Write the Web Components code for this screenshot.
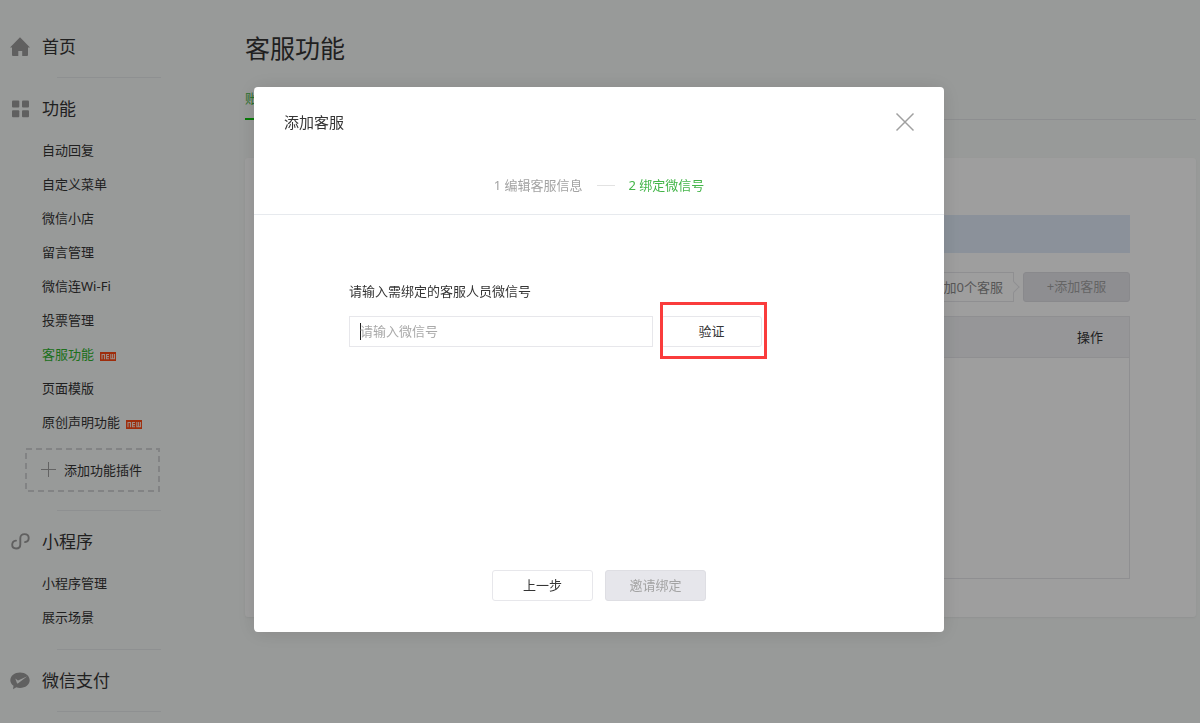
<!DOCTYPE html>
<html lang="zh-CN">
<head>
<meta charset="utf-8">
<title>客服功能</title>
<style>
html{height:100%}
body{margin:0;min-height:100%;background:#f6f8f7;color:#353535;font:13px/20px "Noto Sans","Noto Sans CJK SC",sans-serif}
</style>
</head>
<body>
<template id="t-app">
<style>
:host{display:grid;grid-template-columns:245px minmax(0,1fr);padding-right:4px}
</style>
<mp-sidebar></mp-sidebar>
<mp-service-page></mp-service-page>
<mp-dialog heading="添加客服"><mp-bind-form></mp-bind-form></mp-dialog>
</template>

<template id="t-sidebar">
<style>
:host{display:block;padding:32px 0 0 10px}
</style>
<nav>
<mp-nav-group heading="首页"><svg slot="icon" viewBox="0 0 20 20" width="20" height="20" fill="#9b9b9b"><path d="M10 .3 20 10.500h-2V18a1 1 0 0 1-1 1h-4.800v-5H8.300v5H3a1 1 0 0 1-1-1v-7.500H0z"/></svg></mp-nav-group>
<mp-divider></mp-divider>
<mp-nav-group heading="功能"><svg slot="icon" viewBox="0 0 20 20" width="20" height="20" fill="#9b9b9b"><rect x="2" y="1.500" width="7.300" height="7" rx="1"/><rect x="12" y="1.500" width="7" height="7" rx="1"/><rect x="2" y="11.300" width="7.300" height="7" rx="1"/><rect x="12" y="11.300" width="7" height="7" rx="1"/></svg>
<mp-nav-item>自动回复</mp-nav-item>
<mp-nav-item>自定义菜单</mp-nav-item>
<mp-nav-item>微信小店</mp-nav-item>
<mp-nav-item>留言管理</mp-nav-item>
<mp-nav-item>微信连Wi-Fi</mp-nav-item>
<mp-nav-item>投票管理</mp-nav-item>
<mp-nav-item active fresh>客服功能</mp-nav-item>
<mp-nav-item>页面模版</mp-nav-item>
<mp-nav-item fresh>原创声明功能</mp-nav-item>
<mp-add-plugin slot="after"></mp-add-plugin>
</mp-nav-group>
<mp-divider></mp-divider>
<mp-nav-group heading="小程序"><svg slot="icon" viewBox="0 0 20 20" width="20" height="20" fill="none" stroke="#9b9b9b" stroke-width="1.900" stroke-linecap="round"><path d="M6 8.600C3.800 8.900 2.200 10.500 2.200 12.800c0 2.200 1.700 3.700 3.900 3.700 2.400 0 4.200-1.600 4.200-4V6.200c0-2.400 1.800-4.100 4.200-4.100 2.300 0 4.200 1.500 4.200 3.900 0 2.300-1.500 3.800-3.700 4.100"/></svg>
<mp-nav-item>小程序管理</mp-nav-item>
<mp-nav-item>展示场景</mp-nav-item>
</mp-nav-group>
<mp-divider></mp-divider>
<mp-nav-group heading="微信支付"><svg slot="icon" viewBox="0 0 20 20" width="20" height="20"><path fill="#9b9b9b" d="M10 1.500c5.400 0 9.700 3.400 9.700 7.700s-4.300 7.700-9.700 7.700c-1.300 0-2.600-.2-3.700-.6L3 18.200l.5-3.400C1.500 13.400.3 11.400.3 9.200c0-4.300 4.300-7.700 9.700-7.700z"/><path fill="#f6f8f7" d="m5.300 7.500 2.700 2.100L17.300 5.300 8.200 12.200c-.6.400-1 .3-1.300-.3z"/></svg></mp-nav-group>
<mp-divider></mp-divider>
</nav>
</template>

<template id="t-divider">
<style>
:host{display:block;width:104px;height:1px;margin:15px 0 16px 47px;background:#e6e8ea}
</style>
</template>

<template id="t-nav-group">
<style>
:host{display:block}
h2{display:flex;align-items:center;gap:12px;margin:0;height:30px;font-size:17px;font-weight:400;line-height:30px}
ul{margin:9px 0 0;padding:0 0 0 32px;list-style:none}
ul[hidden]{display:none}
</style>
<h2><slot name="icon"></slot><span></span></h2>
<ul><slot></slot></ul>
<slot name="after"></slot>
</template>

<template id="t-nav-item">
<style>
:host{display:list-item;list-style:none;height:34px}
a{display:inline-flex;align-items:center;gap:6px;height:34px;color:inherit;text-decoration:none}
:host([active]) a{color:#2fb52f}
svg{display:none;margin-top:4px}
:host([fresh]) svg{display:block}
</style>
<a href="#"><slot></slot><svg viewBox="0 0 16 9" width="16" height="9" role="img" aria-label="new"><path fill="#ff4a14" d="M0 0h16v9H0z"/><path fill="none" stroke="#ffe0d4" stroke-width="1.100" d="M2 7.200V2.500h2.500v4.700M9 2.500H6.500v4.200H9M6.500 4.600H9M10.800 2v4.700h3.700V2M12.600 2v4.700"/></svg></a>
</template>

<template id="t-add-plugin">
<style>
:host{display:block;margin:9px 0 18px 15px}
button{display:flex;align-items:center;gap:8px;width:135px;height:44px;padding:0 0 0 15px;border:0;background:none;color:inherit;font:inherit;position:relative}
.edge{position:absolute;inset:0}
</style>
<button type="button"><svg class="edge" width="135" height="44"><rect x="1" y="1" width="133" height="42" fill="none" stroke="#d2d4d6" stroke-width="2" stroke-dasharray="6 4"/></svg><svg width="16" height="16" stroke="#a0a0a0"><path d="M1 7.500h15M8.500 0v15"/></svg>添加功能插件</button>
</template>

<template id="t-service-page">
<style>
:host{display:block;padding-top:28px}
h1{margin:0;font-size:25px;font-weight:400;line-height:40px}
.tabs{display:flex;height:51px;border-bottom:1px solid #e4e6e8}
.tabs a{box-sizing:border-box;width:78px;height:52px;padding-top:20px;border-bottom:2px solid #0cc40c;color:#44b549;text-decoration:none}
.panel{margin-top:38px;padding:57px 66px 38px;border-radius:3px;background:#fff;box-shadow:0 1px 2px #e8ebea}
.notice{height:38px;background:#e0ebf8}
.actions{display:flex;justify-content:flex-end;gap:9px;margin:19px 0 14px}
.tip{position:relative;box-sizing:border-box;width:180px;height:30px;padding-right:10px;border:1px solid #e7e7eb;color:#8d8d8d;line-height:28px;text-align:right}
.tip::after{content:"";position:absolute;right:-5px;top:10px;width:7px;height:7px;border:solid #e7e7eb;border-width:1px 1px 0 0;background:#fff;transform:rotate(45deg)}
table{width:100%;border:1px solid #e7e7eb;border-collapse:collapse}
th{height:40px;padding:0 26px;background:#f2f3f6;border-bottom:1px solid #e7e7eb;font-weight:400;text-align:right}
td{height:220px;padding:0}
</style>
<h1>客服功能</h1>
<div class="tabs"><a href="#">账</a></div>
<section class="panel">
<div class="notice"></div>
<div class="actions"><div class="tip">加0个客服</div><mp-button wide muted>+添加客服</mp-button></div>
<table><thead><tr><th scope="col">操作</th></tr></thead><tbody><tr><td></td></tr></tbody></table>
</section>
</template>

<template id="t-button">
<style>
:host{display:block}
button{box-sizing:border-box;width:101px;height:31px;padding:0 0 2px;border:1px solid #e7e7eb;border-radius:3px;background:#fff;color:#353535;font:inherit}
:host([wide]) button{width:107px;height:30px}
:host([muted]) button{background:#e6e6eb;border-color:#dedee3;color:#a3a3a3}
</style>
<button type="button"><slot></slot></button>
</template>

<template id="t-dialog">
<style>
:host{position:fixed;inset:0;display:flex;align-items:center;justify-content:center;padding:0 2px 4px 0;background:rgba(0,0,0,.38)}
section{width:690px;border-radius:4px;background:#fff;box-shadow:0 1px 20px rgba(0,0,0,.12)}
header{display:flex;align-items:center;justify-content:space-between;height:70px;padding:0 29px 0 30px}
h3{margin:0;font-size:15px;font-weight:400}
.close{display:block;padding:0;border:0;background:none;line-height:0}
</style>
<section role="dialog" aria-modal="true" aria-labelledby="h">
<header><h3 id="h"></h3><button class="close" type="button" aria-label="关闭"><svg width="20" height="20" stroke="#a0a0a0" stroke-width="1.500"><path d="m1.500 1.500 17 17M18.500 1.500l-17 17"/></svg></button></header>
<slot></slot>
</section>
</template>

<template id="t-bind-form">
<style>
:host{display:block}
ol{display:flex;justify-content:center;align-items:center;gap:14px;height:57px;margin:0;padding:0;border-bottom:1px solid #e7eaee;list-style:none;color:#a3a3a3}
ol .now{color:#44b549}
li{padding-bottom:2px}
ol .line{width:18px;height:1px;padding:0;background:#e2e2e2}
.body{padding:66px 95px 31px}
label{display:block;margin-bottom:15px}
.row{display:flex;gap:8px}
input{box-sizing:border-box;width:304px;height:31px;padding:0 10px 2px;border:1px solid #e7e7eb;outline:0;background:linear-gradient(#222,#222) 10px 6px/1px 17px no-repeat #fff;color:inherit;font:inherit}
input::placeholder{color:#a9a9a9;opacity:1}
.marked{position:relative}
.marked::after{content:"";position:absolute;inset:-14px -5px -12px -1px;border:3px solid #fa3c3c;pointer-events:none}
.foot{display:flex;justify-content:center;gap:12px;margin-top:223px}
</style>
<ol><li>1 编辑客服信息</li><li class="line" role="presentation"></li><li class="now">2 绑定微信号</li></ol>
<div class="body">
<label for="wx">请输入需绑定的客服人员微信号</label>
<div class="row"><input id="wx" type="text" placeholder="请输入微信号"><mp-button class="marked">验证</mp-button></div>
<div class="foot"><mp-button>上一步</mp-button><mp-button muted>邀请绑定</mp-button></div>
</div>
</template>

<mp-app></mp-app>

<script>
class Base extends HTMLElement {
  constructor() {
    super();
    const id = this.localName.replace('mp-', 't-');
    this.attachShadow({mode: 'open'}).append(document.getElementById(id).content.cloneNode(true));
  }
}
class Divider extends Base {}
class NavItem extends Base {}
class AddPlugin extends Base {}
class ActionButton extends Base {}
class NavGroup extends Base {
  connectedCallback() {
    this.shadowRoot.querySelector('h2 span').textContent = this.getAttribute('heading');
    this.shadowRoot.querySelector('ul').hidden = !this.querySelector('mp-nav-item');
  }
}
class Dialog extends Base {
  connectedCallback() {
    this.shadowRoot.querySelector('h3').textContent = this.getAttribute('heading');
    this.shadowRoot.querySelector('.close').addEventListener('click', () => this.remove());
  }
}
class BindForm extends Base {}
class Sidebar extends Base {}
class ServicePage extends Base {}
class App extends Base {}
customElements.define('mp-divider', Divider);
customElements.define('mp-nav-item', NavItem);
customElements.define('mp-add-plugin', AddPlugin);
customElements.define('mp-button', ActionButton);
customElements.define('mp-nav-group', NavGroup);
customElements.define('mp-dialog', Dialog);
customElements.define('mp-bind-form', BindForm);
customElements.define('mp-sidebar', Sidebar);
customElements.define('mp-service-page', ServicePage);
customElements.define('mp-app', App);
</script>
</body>
</html>
